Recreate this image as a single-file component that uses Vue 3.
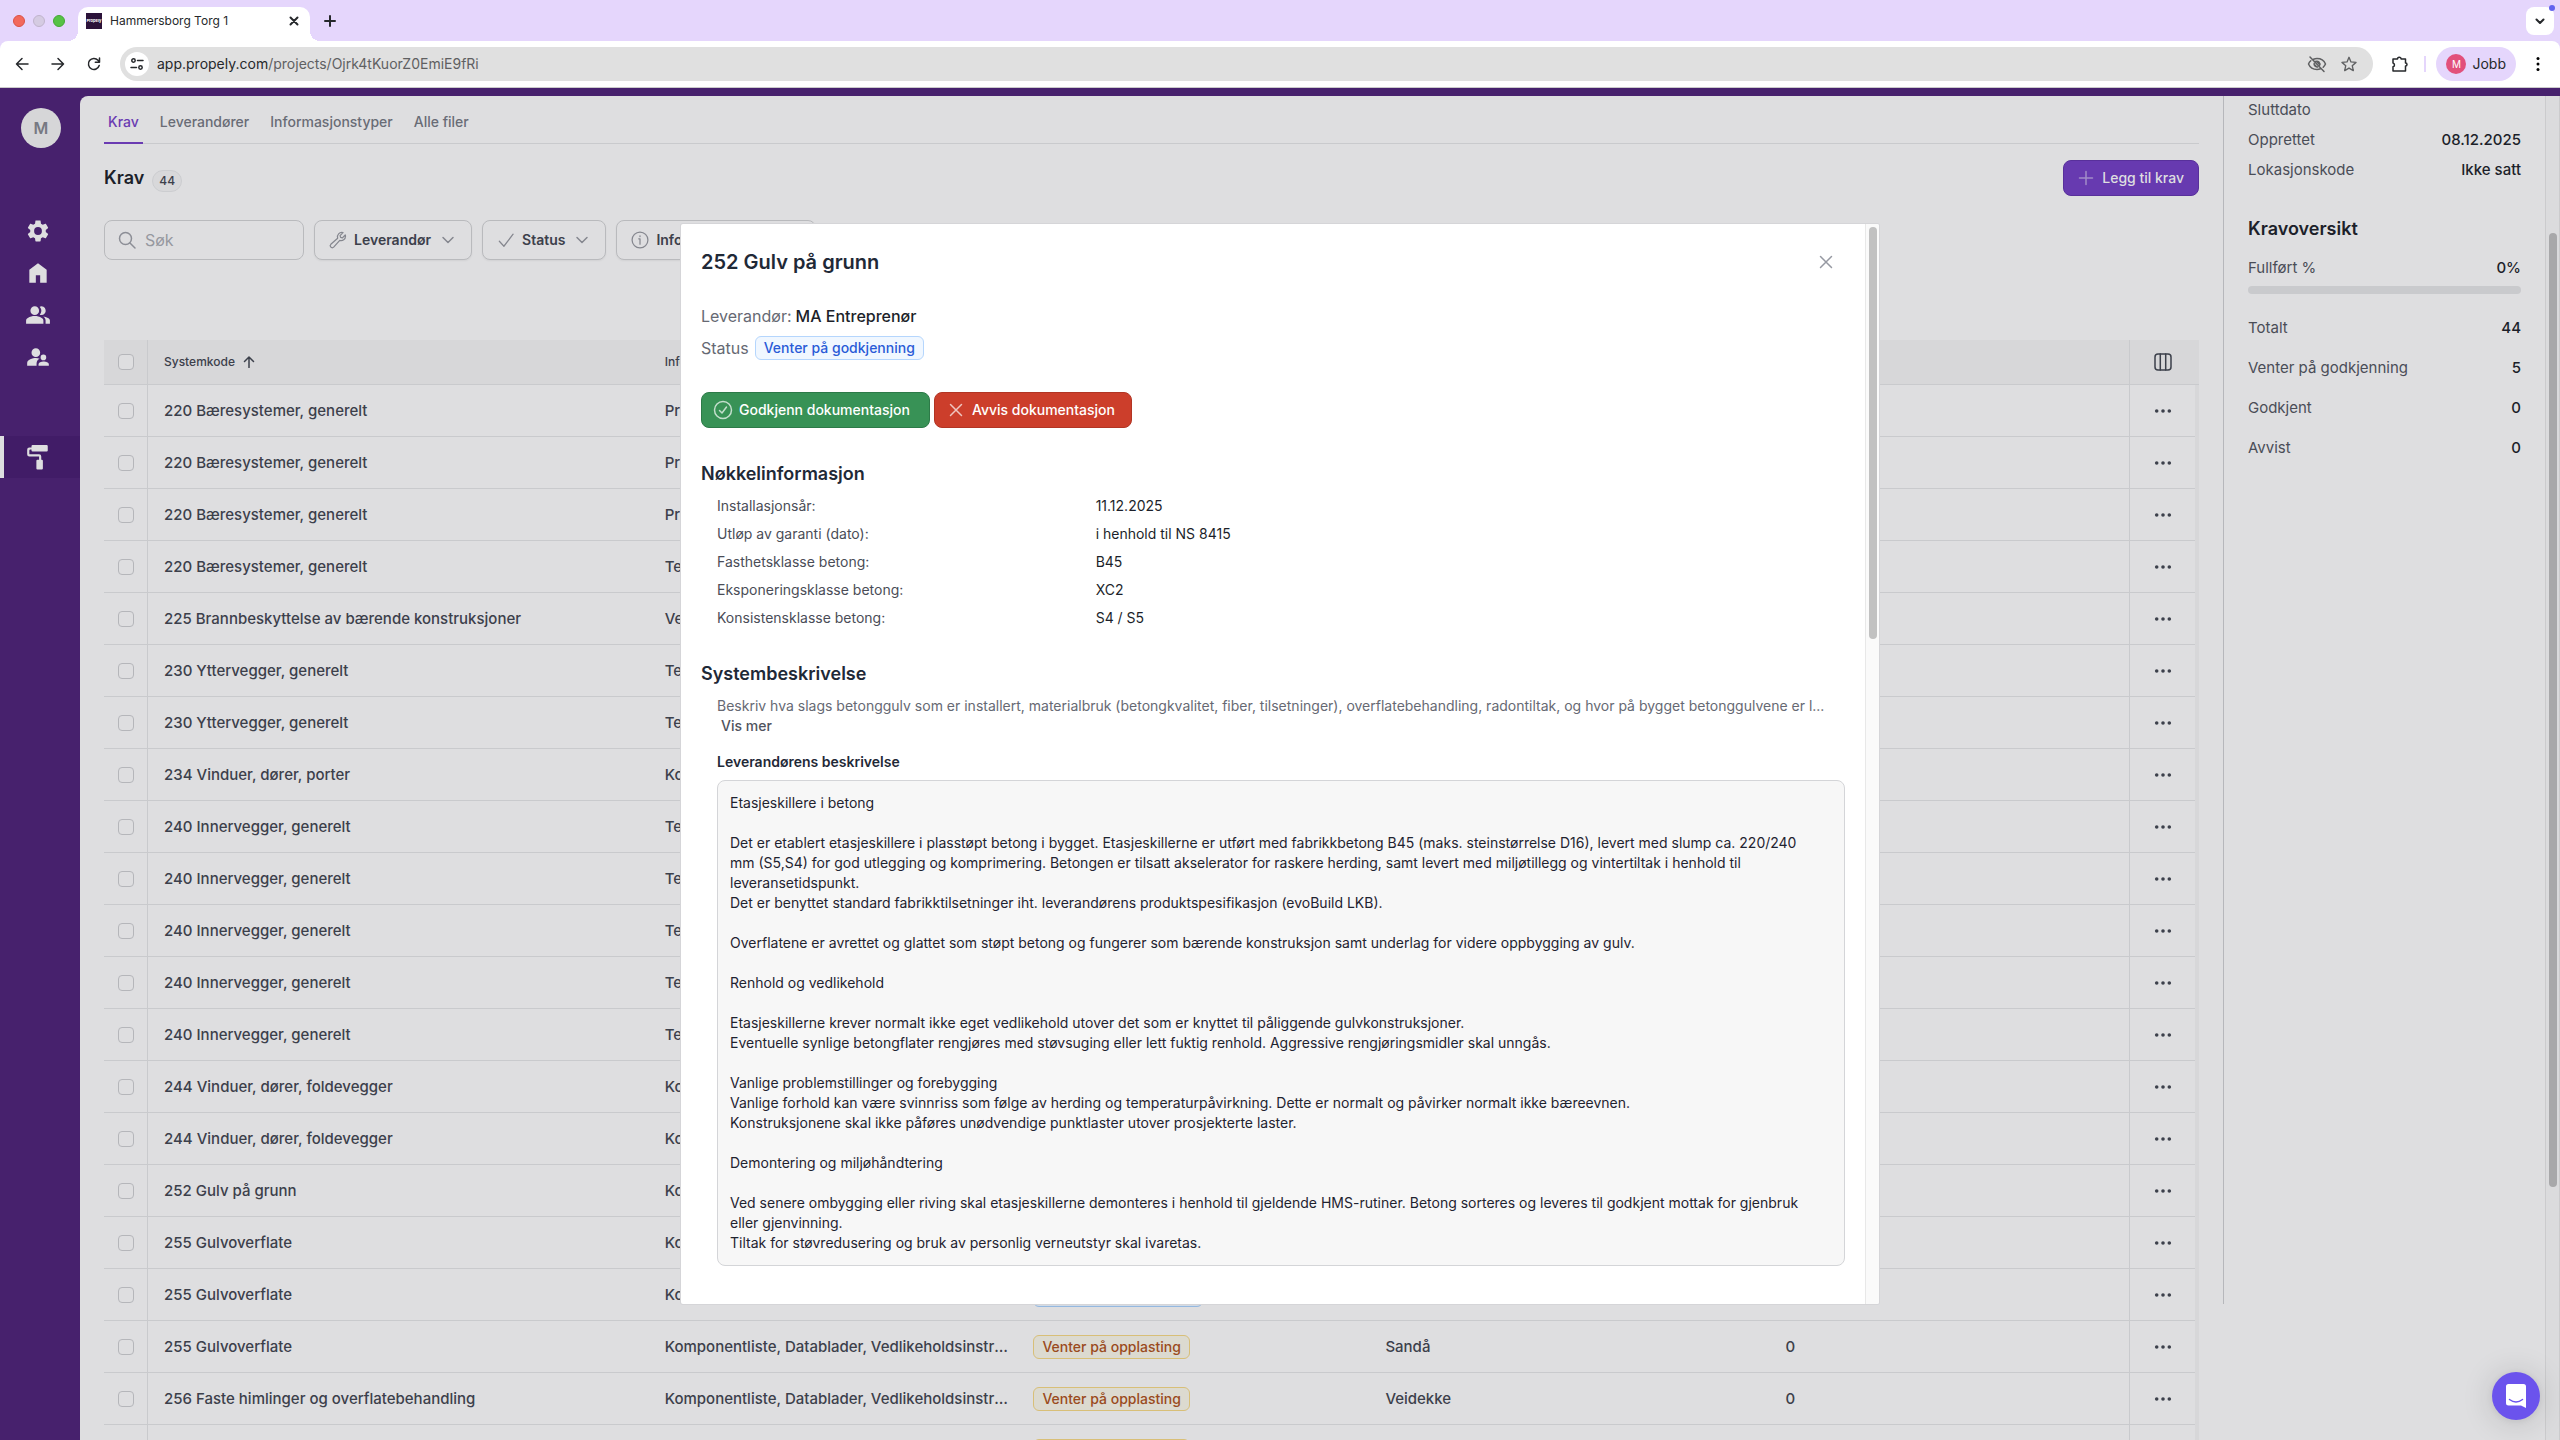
<template>
  <div class="window">
    <header class="tabstrip">
      <div class="lights">
        <span class="light light--close"></span>
        <span class="light light--min"></span>
        <span class="light light--max"></span>
      </div>
      <div class="browser-tab">
        <span class="favicon">Propely</span>
        <span class="browser-tab__title">Hammersborg Torg 1</span>
        <button class="plain" aria-label="Lukk fane">
          <svg width="12" height="12" viewBox="0 0 12 12" class="stroke stroke--bold"><path d="M2.5 2.5l7 7M9.5 2.5l-7 7" /></svg>
        </button>
      </div>
      <button class="plain new-tab" aria-label="Ny fane">
        <svg width="12" height="12" viewBox="0 0 12 12" class="stroke stroke--bold"><path d="M6 1v10M1 6h10" /></svg>
      </button>
      <button class="tab-search" aria-label="Søk i faner">
        <svg width="12" height="12" viewBox="0 0 12 12" class="stroke stroke--bold"><path d="M2.5 4.5L6 8l3.500-3.500" /></svg>
        <span class="tab-search__dot"></span>
      </button>
    </header>

    <div class="toolbar">
      <button class="plain nav-btn" aria-label="Tilbake">
        <svg width="16" height="16" viewBox="0 0 16 16" class="stroke"><path d="M14 8H2.500M8 2.500L2.500 8 8 13.500" /></svg>
      </button>
      <button class="plain nav-btn" aria-label="Frem">
        <svg width="16" height="16" viewBox="0 0 16 16" class="stroke"><path d="M2 8h11.500M8 2.500L13.500 8 8 13.500" /></svg>
      </button>
      <button class="plain nav-btn" aria-label="Last inn på nytt">
        <svg width="16" height="16" viewBox="0 0 16 16" class="stroke"><path d="M13.200 9.500A5.500 5.500 0 1 1 12 4.200L13.500 6M13.500 2v4.200H9.300" /></svg>
      </button>
      <div class="omnibox">
        <span class="site-info">
          <svg width="14" height="14" viewBox="0 0 14 14" class="stroke"><circle cx="3.500" cy="3.500" r="1.700" /><path d="M7.500 3.500H13M1 10.500h5.500" /><circle cx="10.500" cy="10.500" r="1.700" /></svg>
        </span>
        <span class="url">app.propely.com<span class="url__path">/projects/Ojrk4tKuorZ0EmiE9fRi</span></span>
        <svg width="20" height="20" viewBox="0 0 20 20" class="stroke stroke--grey"><path d="M6.500 5.200A9.800 9.800 0 0 1 10 4.500c3.700 0 7 2 8.500 5.500a9.200 9.200 0 0 1-2.300 3.200M13.500 14.800a9.800 9.800 0 0 1-3.500.7C6.300 15.500 3 13.500 1.500 10a9.200 9.200 0 0 1 2.300-3.200M3 3l14 14.500" /><path d="M12.500 11.500A3 3 0 0 0 8.500 7.500M7.200 9.200a3 3 0 0 0 3.600 3.700" fill="#5f6062" /></svg>
        <svg width="18" height="18" viewBox="0 0 20 20" class="stroke stroke--grey star"><path d="M10 2.500l2.200 5.200 5.600.5-4.200 3.700 1.200 5.500-4.800-2.900-4.800 2.900 1.200-5.500-4.200-3.700 5.600-.5z" /></svg>
      </div>
      <svg width="18" height="18" viewBox="0 0 18 18" class="stroke"><path d="M2 4h4.500a1.800 1.800 0 0 1 3.600 0H14.500v4a1.500 1.500 0 0 1 0 3v5H2v-4.200a1.900 1.900 0 0 0 0-3.700z" /></svg>
      <span class="toolbar__sep"></span>
      <button class="profile"><span class="profile__img">M</span>Jobb</button>
      <button class="plain kebab" aria-label="Meny">
        <svg width="16" height="16" viewBox="0 0 16 16"><circle cx="8" cy="2.500" r="1.500" /><circle cx="8" cy="8" r="1.500" /><circle cx="8" cy="13.500" r="1.500" /></svg>
      </button>
    </div>

    <div class="app">
      <aside class="sidebar">
        <div class="avatar">M</div>
        <nav class="side-nav">
          <a v-for="item in sideItems" :key="item.label" href="#" :aria-label="item.label" :class="['side-link', { 'side-link--active': item.active }]">
            <svg width="26" height="26" viewBox="0 0 24 24"><path :d="item.icon" fill-rule="evenodd" /></svg>
          </a>
        </nav>
      </aside>

      <div class="page">
        <main class="content">
          <nav class="tabs">
            <a v-for="(tab, i) in tabs" :key="tab" href="#" :class="['tab', { 'tab--active': i === 0 }]">{{ tab }}</a>
          </nav>

          <div class="heading">
            <h1>Krav</h1>
            <span class="count">44</span>
            <button class="btn btn--primary">
              <svg width="16" height="16" viewBox="0 0 16 16" class="stroke"><path d="M8 1.500v13M1.500 8h13" /></svg>
              Legg til krav
            </button>
          </div>

          <div class="filters">
            <label class="search">
              <svg width="20" height="20" viewBox="0 0 20 20" class="stroke"><circle cx="8.500" cy="8.500" r="6" /><path d="M13 13l5 5" /></svg>
              <input type="text" placeholder="Søk" aria-label="Søk" />
            </label>
            <button v-for="f in filters" :key="f.label" class="filter">
              <svg width="20" height="20" viewBox="0 0 24 24" class="stroke"><path :d="f.icon" /></svg>
              {{ f.label }}
              <svg width="14" height="14" viewBox="0 0 14 14" class="stroke filter__arrow"><path d="M2 4.500l5 5 5-5" /></svg>
            </button>
          </div>

          <table class="table">
            <colgroup>
              <col class="col-check" />
              <col class="col-code" />
              <col class="col-info" />
              <col class="col-status" />
              <col class="col-supplier" />
              <col />
              <col class="col-actions" />
              <col class="col-gutter" />
            </colgroup>
            <thead>
              <tr>
                <th class="cell-check"><input type="checkbox" aria-label="Velg alle" /></th>
                <th>
                  <span class="sort">Systemkode
                    <svg width="12" height="12" viewBox="0 0 12 12" class="stroke"><path d="M6 11.500V1.500M1.500 5.500L6 1l4.500 4.500" /></svg>
                  </span>
                </th>
                <th>Informasjonstype</th>
                <th>Status</th>
                <th>Leverandør</th>
                <th>Filer</th>
                <th class="cell-actions">
                  <button class="plain" aria-label="Kolonner">
                    <svg width="20" height="20" viewBox="0 0 20 20" class="stroke"><rect x="2" y="2" width="16" height="16" rx="3" /><path d="M7.300 2v16M12.700 2v16" /></svg>
                  </button>
                </th>
                <th class="cell-gutter"></th>
              </tr>
            </thead>
            <tbody>
              <tr v-for="(row, i) in rows" :key="i">
                <td class="cell-check"><input type="checkbox" :aria-label="'Velg ' + row.code" /></td>
                <td>{{ row.code }}</td>
                <td class="cell-cut">{{ row.info }}</td>
                <td><span :class="['tag', row.pending ? 'tag--dim-blue' : 'tag--amber']">{{ row.pending ? 'Venter på godkjenning' : 'Venter på opplasting' }}</span></td>
                <td>{{ row.supplier }}</td>
                <td>0</td>
                <td class="cell-actions">
                  <button class="plain" aria-label="Handlinger">
                    <svg width="20" height="20" viewBox="0 0 20 20"><circle cx="3" cy="10" r="2" /><circle cx="10" cy="10" r="2" /><circle cx="17" cy="10" r="2" /></svg>
                  </button>
                </td>
                <td class="cell-gutter"></td>
              </tr>
            </tbody>
          </table>
        </main>

        <aside class="summary">
          <dl class="facts">
            <div v-for="f in facts" :key="f.label" class="fact"><dt>{{ f.label }}</dt><dd>{{ f.value }}</dd></div>
          </dl>
          <h2>Kravoversikt</h2>
          <dl class="progress-fact">
            <div class="fact"><dt>Fullført %</dt><dd>0%</dd></div>
          </dl>
          <div class="bar"><div class="bar__fill" :style="{ width: progress + '%' }"></div></div>
          <dl class="totals">
            <div v-for="t in totals" :key="t.label" class="fact"><dt>{{ t.label }}</dt><dd>{{ t.value }}</dd></div>
          </dl>
        </aside>

        <div class="page-scroll"><div class="page-scroll__thumb"></div></div>
      </div>

      <div class="overlay">
        <section class="modal" role="dialog" aria-labelledby="modal-title">
          <div class="modal__body">
            <div class="modal__head">
              <h2 id="modal-title">252 Gulv på grunn</h2>
              <button class="plain modal__close" aria-label="Lukk">
                <svg width="14" height="14" viewBox="0 0 14 14" class="stroke"><path d="M1.500 1.500l11 11M12.500 1.500l-11 11" /></svg>
              </button>
            </div>
            <p class="meta meta--first">Leverandør: <strong>MA Entreprenør</strong></p>
            <p class="meta">Status <span class="tag tag--blue">Venter på godkjenning</span></p>
            <div class="modal__actions">
              <button class="btn btn--green">
                <svg width="20" height="20" viewBox="0 0 20 20" class="stroke"><circle cx="10" cy="10" r="8.500" /><path d="M6.500 10.500l2.500 2.500 4.500-6" /></svg>
                Godkjenn dokumentasjon
              </button>
              <button class="btn btn--red">
                <svg width="20" height="20" viewBox="0 0 20 20" class="stroke"><path d="M4.500 4.500l11 11M15.500 4.500l-11 11" /></svg>
                Avvis dokumentasjon
              </button>
            </div>

            <h3>Nøkkelinformasjon</h3>
            <dl class="keys">
              <template v-for="k in keyInfo" :key="k.label">
                <dt>{{ k.label }}</dt>
                <dd>{{ k.value }}</dd>
              </template>
            </dl>

            <h3 class="h3--second">Systembeskrivelse</h3>
            <div class="indent">
              <p class="lead">{{ lead }}</p>
              <button class="plain more">Vis mer</button>
              <h4>Leverandørens beskrivelse</h4>
              <div class="description">{{ description }}</div>
            </div>
          </div>
          <div class="modal__scroll"><div class="modal__thumb"></div></div>
        </section>
      </div>

      <button class="chat" aria-label="Åpne chat">
        <svg width="24" height="24" viewBox="0 0 24 24"><path d="M4.500 0h15A2.500 2.500 0 0 1 22 2.500V24l-5-2.500H4.500A2.500 2.500 0 0 1 2 19V2.500A2.500 2.500 0 0 1 4.500 0z" fill="#fff" /><path d="M5.500 15.500c4 3 9 3 13 0" fill="none" stroke="#6b53ed" stroke-width="1.500" stroke-linecap="round" /></svg>
      </button>
    </div>
  </div>
</template>

<script setup>
import { ref } from 'vue'

const progress = ref(0)

const tabs = ['Krav', 'Leverandører', 'Informasjonstyper', 'Alle filer']

const sideItems = [
  { label: 'Innstillinger', icon: 'M19.140 12.940c.04-.3.06-.61.06-.94 0-.32-.02-.64-.07-.94l2.030-1.580c.18-.14.23-.41.12-.61l-1.920-3.320c-.12-.22-.37-.29-.59-.22l-2.390.96c-.5-.38-1.030-.7-1.620-.94l-.36-2.540c-.04-.24-.24-.41-.48-.41h-3.840c-.24 0-.43.17-.47.41l-.36 2.540c-.59.24-1.130.57-1.620.94l-2.390-.96c-.22-.08-.47 0-.59.22L2.740 8.870c-.12.21-.08.47.12.61l2.030 1.580c-.05.3-.09.63-.09.94s.02.64.07.94l-2.030 1.580c-.18.14-.23.41-.12.61l1.920 3.320c.12.22.37.29.59.22l2.390-.96c.5.38 1.030.7 1.620.94l.36 2.540c.05.24.24.41.48.41h3.840c.24 0 .44-.17.47-.41l.36-2.540c.59-.24 1.130-.56 1.620-.94l2.390.96c.22.08.47 0 .59-.22l1.920-3.320c.12-.22.07-.47-.12-.61l-2.010-1.580zM12 15.600A3.600 3.600 0 1 1 12 8.400a3.600 3.600 0 0 1 0 7.200z' },
  { label: 'Hjem', icon: 'M4 21V9l8-6 8 6v12h-6v-7h-4v7z' },
  { label: 'Brukere', icon: 'M1 20v-2.800c0-1.100.6-2 1.600-2.500C4.600 13.600 6.800 13 9 13s4.400.6 6.400 1.700c1 .5 1.600 1.400 1.600 2.500V20zM19 20v-3c0-1.500-.8-2.800-2.200-3.700 1.500.2 2.900.7 4.400 1.400 1.200.6 1.800 1.500 1.800 2.300v3zM9 12a4 4 0 1 1 0-8 4 4 0 0 1 0 8zM13.600 11.700a5.900 5.900 0 0 0 0-7.400A4 4 0 1 1 15 12c-.5 0-1-.1-1.400-.3z' },
  { label: 'Leverandører', icon: 'M10 12a4 4 0 1 1 0-8 4 4 0 0 1 0 8zM17 15a2.600 2.600 0 1 1 0-5.200 2.600 2.600 0 0 1 0 5.200zM2 20v-2.500c0-2.800 5-4.500 8-4.500 1.200 0 2.500.2 3.500.6-2.500 1.300-2.800 2.700-2.800 6.400zM12.500 20v-1.400c0-1.600 2.500-2.400 4.500-2.400s5 .8 5 2.400V20z' },
  { label: 'Prosjekt', active: true, icon: 'M7 1h13a1 1 0 0 1 1 1v4a1 1 0 0 1-1 1H7a1 1 0 0 1-1-1V5H5a1 1 0 0 0-1 1V9.500h9a2 2 0 0 1 2 2V14.500h.500a1 1 0 0 1 1 1v7a1 1 0 0 1-1 1h-4a1 1 0 0 1-1-1v-7a1 1 0 0 1 1-1H13v-3H4a2 2 0 0 1-2-2V5.200a2 2 0 0 1 2-2h2V2a1 1 0 0 1 1-1z' }
]

const filters = [
  { label: 'Leverandør', icon: 'M21 7.500a5.200 5.200 0 0 1-6.900 4.900l-7.300 8.200a2.300 2.300 0 0 1-3.400-3.400l8.200-7.300A5.200 5.200 0 0 1 18 3.200l-3.500 3.500.6 2.200 2.200.6L20.700 6c.2.500.3 1 .3 1.500z' },
  { label: 'Status', icon: 'M4 13.500l5.500 6L20.500 5' },
  { label: 'Informasjonstype', icon: 'M12 2.500a9.500 9.500 0 1 1 0 19 9.500 9.500 0 0 1 0-19zM10.500 10.500H12V17M12 7v.8' }
]

const rows = [
  { code: '220 Bæresystemer, generelt', info: 'Produktdatablad', supplier: 'Veidekke' },
  { code: '220 Bæresystemer, generelt', info: 'Produktdatablad', supplier: 'Veidekke' },
  { code: '220 Bæresystemer, generelt', info: 'Produktdatablad', supplier: 'Veidekke' },
  { code: '220 Bæresystemer, generelt', info: 'Tegninger', supplier: 'Veidekke' },
  { code: '225 Brannbeskyttelse av bærende konstruksjoner', info: 'Vedlikehold', supplier: 'Veidekke' },
  { code: '230 Yttervegger, generelt', info: 'Tegninger', supplier: 'Veidekke' },
  { code: '230 Yttervegger, generelt', info: 'Tegninger', supplier: 'Veidekke' },
  { code: '234 Vinduer, dører, porter', info: 'Komponentliste', supplier: 'Veidekke' },
  { code: '240 Innervegger, generelt', info: 'Tegninger', supplier: 'Veidekke' },
  { code: '240 Innervegger, generelt', info: 'Tegninger', supplier: 'Veidekke' },
  { code: '240 Innervegger, generelt', info: 'Tegninger', supplier: 'Veidekke' },
  { code: '240 Innervegger, generelt', info: 'Tegninger', supplier: 'Veidekke' },
  { code: '240 Innervegger, generelt', info: 'Tegninger', supplier: 'Veidekke' },
  { code: '244 Vinduer, dører, foldevegger', info: 'Komponentliste', supplier: 'Veidekke' },
  { code: '244 Vinduer, dører, foldevegger', info: 'Komponentliste', supplier: 'Veidekke' },
  { code: '252 Gulv på grunn', info: 'Komponentliste', supplier: 'MA Entreprenør', pending: true },
  { code: '255 Gulvoverflate', info: 'Komponentliste', supplier: 'Sandå' },
  { code: '255 Gulvoverflate', info: 'Komponentliste', supplier: 'Sandå', pending: true },
  { code: '255 Gulvoverflate', info: 'Komponentliste, Datablader, Vedlikeholdsinstruks', supplier: 'Sandå' },
  { code: '256 Faste himlinger og overflatebehandling', info: 'Komponentliste, Datablader, Vedlikeholdsinstruks', supplier: 'Veidekke' },
  { code: '256 Faste himlinger', info: 'Komponentliste', supplier: 'Veidekke' }
]

const facts = [
  { label: 'Sluttdato', value: '' },
  { label: 'Opprettet', value: '08.12.2025' },
  { label: 'Lokasjonskode', value: 'Ikke satt' }
]

const totals = [
  { label: 'Totalt', value: 44 },
  { label: 'Venter på godkjenning', value: 5 },
  { label: 'Godkjent', value: 0 },
  { label: 'Avvist', value: 0 }
]

const keyInfo = [
  { label: 'Installasjonsår:', value: '11.12.2025' },
  { label: 'Utløp av garanti (dato):', value: 'i henhold til NS 8415' },
  { label: 'Fasthetsklasse betong:', value: 'B45' },
  { label: 'Eksponeringsklasse betong:', value: 'XC2' },
  { label: 'Konsistensklasse betong:', value: 'S4 / S5' }
]

const lead = 'Beskriv hva slags betonggulv som er installert, materialbruk (betongkvalitet, fiber, tilsetninger), overflatebehandling, radontiltak, og hvor på bygget betonggulvene er l...'

const description = `Etasjeskillere i betong

Det er etablert etasjeskillere i plasstøpt betong i bygget. Etasjeskillerne er utført med fabrikkbetong B45 (maks. steinstørrelse D16), levert med slump ca. 220/240
mm (S5,S4) for god utlegging og komprimering. Betongen er tilsatt akselerator for raskere herding, samt levert med miljøtillegg og vintertiltak i henhold til
leveransetidspunkt.
Det er benyttet standard fabrikktilsetninger iht. leverandørens produktspesifikasjon (evoBuild LKB).

Overflatene er avrettet og glattet som støpt betong og fungerer som bærende konstruksjon samt underlag for videre oppbygging av gulv.

Renhold og vedlikehold

Etasjeskillerne krever normalt ikke eget vedlikehold utover det som er knyttet til påliggende gulvkonstruksjoner.
Eventuelle synlige betongflater rengjøres med støvsuging eller lett fuktig renhold. Aggressive rengjøringsmidler skal unngås.

Vanlige problemstillinger og forebygging
Vanlige forhold kan være svinnriss som følge av herding og temperaturpåvirkning. Dette er normalt og påvirker normalt ikke bæreevnen.
Konstruksjonene skal ikke påføres unødvendige punktlaster utover prosjekterte laster.

Demontering og miljøhåndtering

Ved senere ombygging eller riving skal etasjeskillerne demonteres i henhold til gjeldende HMS-rutiner. Betong sorteres og leveres til godkjent mottak for gjenbruk
eller gjenvinning.
Tiltak for støvredusering og bruk av personlig verneutstyr skal ivaretas.`
</script>

<style>
body {
  margin: 0;
  overflow: hidden;
}
</style>

<style scoped>
.window {
  display: flex;
  flex-direction: column;
  height: 100vh;
  overflow: hidden;
  background: #e5d6fc;
  font-family: Inter, sans-serif;
  font-size: 15px;
  line-height: 20px;
  color: #3c404b;
}

.window *,
.window *::before,
.window *::after {
  box-sizing: border-box;
}

button,
input {
  font: inherit;
  color: inherit;
}

h1,
h2,
h3,
h4,
p,
dl,
dd {
  margin: 0;
}

svg {
  flex: none;
  display: block;
}

.plain {
  display: inline-flex;
  padding: 0;
  border: 0;
  background: none;
}

.stroke {
  fill: none;
  stroke: currentColor;
  stroke-width: 1.5;
  stroke-linecap: round;
  stroke-linejoin: round;
}

.stroke--bold {
  stroke-width: 2;
}

.stroke--grey {
  color: #5f6062;
}

/* Browser */
.tabstrip {
  display: flex;
  align-items: center;
  flex: none;
  height: 41px;
  padding-right: 6px;
  color: #26282b;
}

.lights {
  display: flex;
  gap: 8px;
  padding: 0 13px;
}

.light {
  width: 12px;
  height: 12px;
  border: 1px solid #db5144;
  border-radius: 50%;
  background: #f2695c;
}

.light--min {
  border-color: #c0b4cc;
  background: #d5cbe2;
}

.light--max {
  border-color: #44a834;
  background: #56c245;
}

.browser-tab {
  position: relative;
  display: flex;
  align-items: center;
  gap: 8px;
  align-self: flex-end;
  width: 232px;
  height: 34px;
  padding: 0 10px 6px 8px;
  border-radius: 10px 10px 0 0;
  background: #fff;
  font-size: 12px;
}

.browser-tab::before,
.browser-tab::after {
  content: '';
  position: absolute;
  bottom: 0;
  left: -10px;
  width: 10px;
  height: 10px;
  background: radial-gradient(circle at 0 0, transparent 10px, #fff 10px);
}

.browser-tab::after {
  left: auto;
  right: -10px;
  background: radial-gradient(circle at 100% 0, transparent 10px, #fff 10px);
}

.favicon {
  display: flex;
  align-items: center;
  justify-content: center;
  width: 16px;
  height: 16px;
  background: #2b1239;
  color: #fff;
  font-size: 4px;
  font-weight: 700;
}

.browser-tab__title {
  flex: 1;
}

.new-tab {
  margin-left: 14px;
}

.tab-search {
  position: relative;
  display: flex;
  align-items: center;
  justify-content: center;
  width: 28px;
  height: 28px;
  margin-left: auto;
  border: 0;
  border-radius: 8px;
  background: #fff;
}

.tab-search__dot {
  position: absolute;
  top: -2px;
  right: -1px;
  width: 6px;
  height: 6px;
  border-radius: 50%;
  background: #6163ee;
}

.toolbar {
  display: flex;
  align-items: center;
  flex: none;
  height: 47px;
  padding: 0 14px;
  border-bottom: 1px solid #cbcbcb;
  border-radius: 8px 8px 0 0;
  background: #fff;
  color: #26282b;
}

.nav-btn {
  margin-right: 20px;
}

.omnibox {
  display: flex;
  align-items: center;
  flex: 1;
  height: 34px;
  margin-left: -2px;
  margin-right: 18px;
  padding: 0 15px 0 5px;
  border-radius: 17px;
  background: #e0e0e0;
  font-size: 14px;
}

.site-info {
  display: flex;
  align-items: center;
  justify-content: center;
  width: 24px;
  height: 24px;
  border-radius: 50%;
  background: #fff;
}

.url {
  flex: 1;
  margin-left: 8px;
}

.url__path {
  color: #5f6062;
}

.star {
  margin-left: 13px;
}

.toolbar__sep {
  width: 2px;
  height: 16px;
  margin: 0 10px 0 15px;
  background: #e5d6fc;
}

.profile {
  display: flex;
  align-items: center;
  gap: 6px;
  height: 34px;
  padding: 0 10px;
  border: 0;
  border-radius: 17px;
  background: #e5d6fc;
  font-size: 14px;
}

.profile__img {
  width: 20px;
  height: 20px;
  border-radius: 50%;
  background: #e2507b;
  color: #fff;
  font-size: 10px;
  line-height: 20px;
  text-align: center;
}

.kebab {
  margin-left: 14px;
}

/* App */
.app {
  position: relative;
  display: flex;
  flex: 1;
  min-height: 0;
  padding-top: 8px;
  background: #47216d;
}

.sidebar {
  flex: none;
  width: 80px;
}

.avatar {
  width: 40px;
  height: 40px;
  margin: 12px 21px 0;
  border-radius: 50%;
  background: #d6d6d8;
  color: #777982;
  font-size: 16px;
  font-weight: 600;
  line-height: 40px;
  text-align: center;
}

.side-nav {
  display: flex;
  flex-direction: column;
  margin-top: 62px;
}

.side-link {
  display: flex;
  align-items: center;
  height: 42px;
  padding-left: 25px;
  fill: #dedee0;
}

.side-link--active {
  margin-top: 58px;
  padding-left: 21px;
  border-left: 4px solid #dedee0;
  background: #411c67;
}

.page {
  display: flex;
  align-items: flex-start;
  flex: 1;
  min-width: 0;
  overflow: hidden;
  border-top-left-radius: 8px;
  background: #dedee0;
}

.content {
  flex: 1;
  min-width: 0;
  padding: 0 24px;
}

.tabs {
  display: flex;
  gap: 13px;
  box-shadow: inset 0 -1px #c9cacd;
}

.tab {
  height: 48px;
  padding: 4px 4px 0;
  border-bottom: 2px solid transparent;
  color: #696c76;
  font-size: 14px;
  font-weight: 500;
  line-height: 44px;
  text-decoration: none;
}

.tab--active {
  border-color: #6a3bb2;
  color: #6a3bb2;
}

.heading {
  display: flex;
  align-items: center;
  gap: 8px;
  margin-top: 16px;
}

.heading h1,
.summary h2 {
  color: #1c1f2a;
  font-size: 18px;
  font-weight: 600;
  line-height: 26px;
}

.count {
  height: 22px;
  margin-top: 6px;
  padding: 0 6px;
  border: 1px solid #cccdd0;
  border-radius: 11px;
  background: #d8d8da;
  font-size: 12px;
  font-weight: 500;
}

.btn {
  display: inline-flex;
  align-items: center;
  gap: 6px;
  height: 36px;
  padding: 0 16px 0 11px;
  border: 1px solid;
  border-radius: 8px;
  color: #fff;
  font-weight: 500;
}

.btn svg {
  opacity: 0.7;
}

.btn--primary {
  gap: 8px;
  margin-left: auto;
  padding: 0 14px;
  border-color: #58309b;
  background: #673ab0;
  color: #dedee0;
  font-size: 14px;
}

.btn--primary svg {
  opacity: 0.5;
}

.btn--green {
  padding-right: 19px;
  border-color: #2d7a48;
  background: #389256;
}

.btn--red {
  border-color: #b23524;
  background: #cc3e2b;
}

.filters {
  display: flex;
  gap: 10px;
  margin-top: 24px;
}

.search,
.filter {
  display: flex;
  align-items: center;
  height: 40px;
  border: 1px solid #b9babd;
  border-radius: 8px;
  background: #dedee0;
}

.search {
  width: 200px;
  padding: 0 12px;
  color: #8c8e96;
}

.search input {
  width: 100%;
  margin-left: 8px;
  padding: 0;
  border: 0;
  outline: 0;
  background: none;
  font-size: 16px;
}

.search input::placeholder {
  color: #96989f;
}

.filter {
  gap: 6px;
  padding: 0 16px 0 13px;
  font-size: 14px;
  font-weight: 600;
  box-shadow: 0 1px 2px rgba(0, 0, 0, 0.06);
}

.filter svg {
  color: #85878f;
}

.filter__arrow {
  margin-left: 4px;
}

/* Table */
.table {
  width: 100%;
  margin-top: 80px;
  border-collapse: separate;
  border-spacing: 0;
  table-layout: fixed;
}

.col-check {
  width: 44px;
}

.col-code {
  width: 23.9%;
}

.col-info {
  width: 17.6%;
}

.col-status {
  width: 16.8%;
}

.col-supplier {
  width: 19.1%;
}

.col-actions {
  width: 66px;
}

.col-gutter {
  width: 4px;
}

.table th,
.table td {
  height: 52px;
  padding: 0 16px;
  border-bottom: 1px solid #c9cacd;
  font-weight: 500;
  text-align: left;
  white-space: nowrap;
}

.table th {
  height: 45px;
  background: #d7d7d9;
  font-size: 12px;
}

.table .cell-check {
  padding: 0 13px 0 14px;
  border-right: 1px solid #c9cacd;
}

.table .cell-actions {
  padding: 0 23px;
  border-left: 1px solid #c9cacd;
  fill: #3c404b;
}

.table .cell-actions button {
  vertical-align: middle;
}

.table td.cell-actions svg {
  width: 18px;
  margin-left: 1px;
}

.table .cell-gutter {
  padding: 0;
  background: #d7d7d9;
}

.table td.cell-gutter {
  border-bottom: 0;
}

.table .cell-cut {
  padding-right: 6px;
  overflow: hidden;
  text-overflow: ellipsis;
}

.sort {
  display: inline-flex;
  align-items: center;
  gap: 8px;
}

input[type='checkbox'] {
  display: block;
  width: 16px;
  height: 16px;
  margin: 0;
  appearance: none;
  border: 1px solid #b5b6ba;
  border-radius: 4px;
  background: #dedee0;
}

.tag {
  display: inline-block;
  height: 24px;
  padding: 0 8px;
  border: 1px solid;
  border-radius: 6px;
  font-size: 14px;
  font-weight: 500;
  line-height: 22px;
}

.tag--amber {
  border-color: #d8bf78;
  background: #dcdad0;
  color: #9a4a20;
}

.tag--dim-blue {
  border-color: #94b8e0;
  background: #d2dbe6;
  color: #2850b0;
}

.tag--blue {
  border-color: #b5d6fd;
  background: #f0f7ff;
  color: #2a5bd7;
}

/* Summary */
.summary {
  flex: none;
  width: 322px;
  height: calc(100vh - 232px);
  padding: 0 24px;
  border-left: 1px solid #b6b7bb;
}

.fact {
  display: flex;
  align-items: center;
  justify-content: space-between;
  height: 28px;
}

.fact dt {
  color: #4a4d57;
}

.fact dd {
  color: #1c1f2a;
  font-weight: 500;
}

.facts {
  display: grid;
  gap: 2px;
}

.summary h2 {
  margin: 32px 0 12px;
}

.bar {
  height: 8px;
  margin: 4px 0 14px;
  overflow: hidden;
  border-radius: 4px;
  background: #c9cacd;
}

.bar__fill {
  height: 100%;
  background: #673ab0;
}

.totals .fact {
  height: 40px;
}

.page-scroll {
  align-self: stretch;
  flex: none;
  width: 15px;
  border-left: 1px solid #cbcbcd;
  border-right: 1px solid #cbcbcd;
  background: #dbdbdd;
}

.page-scroll__thumb {
  width: 8px;
  height: 71%;
  margin: 137px 0 0 3px;
  border-radius: 4px;
  background: #a8a8aa;
}

/* Modal */
.overlay {
  position: absolute;
  inset: 0;
  display: flex;
  align-items: center;
  justify-content: center;
}

.modal {
  display: flex;
  width: 90%;
  max-width: 1198px;
  height: 75vh;
  overflow: hidden;
  border-radius: 2px;
  background: #fff;
  box-shadow: 0 0 0 1px #d5d5d8;
  font-size: 14px;
}

.modal__body {
  flex: 1;
  min-width: 0;
  padding: 24px 20px;
}

.modal__head {
  display: flex;
  align-items: center;
  justify-content: space-between;
}

.modal h2,
.modal h3 {
  color: #1f2937;
  font-size: 20px;
  font-weight: 600;
  line-height: 28px;
}

.modal h3 {
  margin: 32px 0 4px;
  font-size: 18px;
}

.modal .h3--second {
  margin: 28px 0 8px;
}

.modal__close {
  padding: 0 12px;
  color: #9699a2;
}

.meta {
  display: flex;
  align-items: center;
  gap: 6px;
  margin-top: 8px;
  color: #666973;
  font-size: 16px;
  line-height: 24px;
}

.meta--first {
  gap: 4px;
  margin-top: 28px;
}

.meta strong {
  color: #1c1f2a;
  font-weight: 500;
}

.modal__actions {
  display: flex;
  gap: 4px;
  margin-top: 32px;
}

.keys {
  display: grid;
  grid-template-columns: 1fr 2fr;
  column-gap: 4px;
  padding-left: 16px;
  line-height: 28px;
}

.keys dt {
  color: #4a4d57;
}

.keys dd {
  color: #1c1f2a;
}

.indent {
  padding-left: 16px;
}

.lead {
  overflow: hidden;
  color: #666973;
  text-overflow: ellipsis;
  white-space: nowrap;
}

.more {
  padding-left: 4px;
  color: #50535d;
  font-weight: 500;
}

.modal h4 {
  margin: 16px 0 8px;
  color: #1f2937;
  font-size: 14px;
  font-weight: 600;
}

.description {
  padding: 12px;
  border: 1px solid #d4d5d8;
  border-radius: 8px;
  background: #f7f7f7;
  color: #1f2330;
  white-space: pre-wrap;
}

.modal__scroll {
  flex: none;
  width: 14px;
  padding: 3px;
  border-left: 1px solid #e8e8e8;
  background: #fafafa;
}

.modal__thumb {
  width: 8px;
  height: 412px;
  border-radius: 4px;
  background: #c1c1c1;
}

.chat {
  position: absolute;
  right: 20px;
  bottom: 20px;
  display: flex;
  align-items: center;
  justify-content: center;
  width: 48px;
  height: 48px;
  padding: 0;
  border: 0;
  border-radius: 50%;
  background: #6b53ed;
  box-shadow: 0 1px 6px rgba(0, 0, 0, 0.06), 0 2px 32px rgba(0, 0, 0, 0.16);
}
</style>
